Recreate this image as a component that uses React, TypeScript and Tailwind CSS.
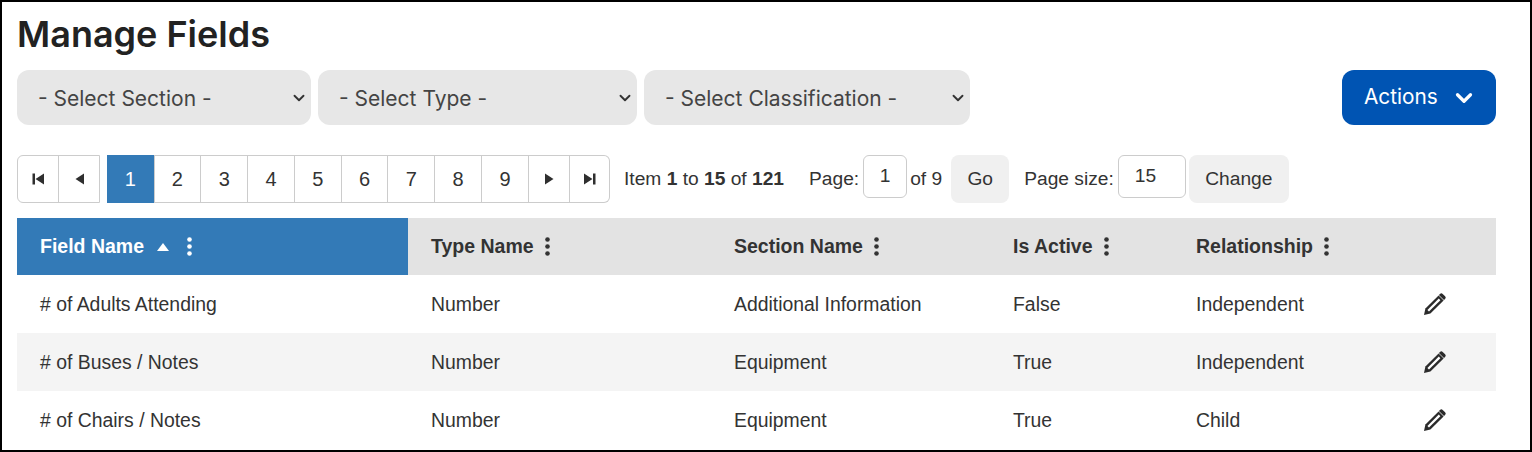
import { ChevronDown } from 'lucide-react';

const rows = [
  { name: '# of Adults Attending', type: 'Number', section: 'Additional Information', active: 'False', rel: 'Independent' },
  { name: '# of Buses / Notes', type: 'Number', section: 'Equipment', active: 'True', rel: 'Independent' },
  { name: '# of Chairs / Notes', type: 'Number', section: 'Equipment', active: 'True', rel: 'Child' },
];

const pages = ['1', '2', '3', '4', '5', '6', '7', '8', '9'];

function Dots({ className = '' }: { className?: string }) {
  return (
    <svg width="5" height="19" viewBox="0 0 5 19" className={className} fill="currentColor">
      <circle cx="2.5" cy="2.5" r="2.300" />
      <circle cx="2.5" cy="9.5" r="2.300" />
      <circle cx="2.5" cy="16.5" r="2.300" />
    </svg>
  );
}

function Pencil() {
  return (
    <svg width="24" height="24" viewBox="0 0 24 24" className="-ml-px">
      <path fill="#2b2b2b" d="M1 23l1.400-6.400L15.600 3.400l5 5L7.400 21.600 1 23z" />
      <path stroke="#fff" strokeWidth="2.200" d="M5.200 18.800L16.600 7.400" />
      <path fill="#2b2b2b" d="M17 1.900a1.900 1.900 0 0 1 2.700 0l2.400 2.400a1.900 1.900 0 0 1 0 2.700l-1.100 1.100-5.100-5.100z" />
    </svg>
  );
}

function Select({ label, width }: { label: string; width: string }) {
  return (
    <div className={`${width} h-[55px] bg-[#e7e7e7] rounded-[12px] flex items-center justify-between pl-[21px] pr-[3px] text-[#444] text-[21px] font-['Inter',sans-serif]`}>
      <span className="pt-[2px]">{label}</span>
      <ChevronDown size={18} strokeWidth={2.500} className="text-[#333]" />
    </div>
  );
}

function PagerArrow({ path }: { path: string }) {
  return (
    <div className="w-[41px] shrink-0 h-full border-r border-[#ccc] last:border-r-0 flex items-center justify-center">
      <svg width="14" height="14" viewBox="0 0 14 14" fill="#2f2f2f">
        <path d={path} />
      </svg>
    </div>
  );
}

function Header({ label }: { label: string }) {
  return (
    <th className="text-left font-bold text-[19.5px] pl-[23px]">
      <span className="flex items-center gap-[11px]">
        {label}
        <Dots />
      </span>
    </th>
  );
}

export default function App() {
  return (
    <div className="w-[1532px] h-[452px] overflow-hidden bg-white border-2 border-black pl-[15px] pr-[34px] text-[#333] font-['Liberation_Sans',Arial,sans-serif]">
      <h1 className="text-[36px] leading-[41px] mt-[12px] font-semibold text-[#222] font-['Inter',sans-serif]">Manage Fields</h1>

      {/* Filters */}
      <div className="flex items-center gap-[7px] mt-[15px]">
        <Select label="- Select Section -" width="w-[294px]" />
        <Select label="- Select Type -" width="w-[319px]" />
        <Select label="- Select Classification -" width="w-[326px]" />
        <button className="ml-auto w-[154px] h-[55px] rounded-[12px] bg-[#0054b3] text-white text-[20.8px] flex items-center pl-[22px] gap-[13px] font-['Inter',sans-serif]">
          <span className="pb-[1px]">Actions</span>
          <ChevronDown size={26} strokeWidth={3} />
        </button>
      </div>

      {/* Pager */}
      <div className="flex items-start mt-[30px] h-[48px] text-[19.2px] text-[#333]">
        <div className="flex h-full border border-[#ccc] rounded-l-[6px] w-[83px] bg-white">
          <PagerArrow path="M1.500 1.500h2.500v11H1.500zM13 1.500v11L4.500 7z" />
          <PagerArrow path="M11 1.500v11L2.500 7z" />
        </div>
        <div className="flex h-full ml-[7px] w-[503px] border-y border-r border-[#ccc] rounded-r-[6px]">
          {pages.map((p, i) => (
            <div
              key={p}
              className={`shrink-0 flex items-center justify-center text-[20px] border-r border-[#ccc] ${i === 0 ? 'w-[47.500px] -my-px bg-[#337ab7] text-white border-[#2e6da4]' : 'w-[46.800px]'}`}
            >
              {p}
            </div>
          ))}
          <PagerArrow path="M3 1.500v11L11.500 7z" />
          <PagerArrow path="M1 1.500v11L9.500 7zM10 1.500h2.500v11H10z" />
        </div>
        <span className="ml-[14px] self-center">Item <b>1</b> to <b>15</b> of <b>121</b></span>
        <span className="ml-[25px] self-center">Page:</span>
        <div className="ml-[4px] w-[44px] h-[43px] border border-[#ccc] rounded-[6px] flex items-center justify-center">1</div>
        <span className="ml-[3px] self-center">of 9</span>
        <div className="ml-[9px] w-[58px] h-full bg-[#f0f0f0] rounded-[8px] flex items-center justify-center">Go</div>
        <span className="ml-[15px] self-center">Page size:</span>
        <div className="ml-[4px] w-[68px] h-[43px] border border-[#ccc] rounded-[6px] flex items-center pl-[16px]">15</div>
        <div className="ml-[3px] w-[100px] h-full bg-[#f0f0f0] rounded-[8px] flex items-center justify-center">Change</div>
      </div>

      {/* Grid */}
      <table className="mt-[15px] w-[1479px] table-fixed border-collapse text-[19.4px]">
        <colgroup>
          <col className="w-[391px]" />
          <col className="w-[303px]" />
          <col className="w-[279px]" />
          <col className="w-[183px]" />
          <col className="w-[228px]" />
          <col className="w-[95px]" />
        </colgroup>
        <thead>
          <tr className="h-[57px] bg-[#e3e3e3]">
            <th className="bg-[#337ab7] text-white text-left font-bold text-[19.5px] pl-[23px]">
              <span className="flex items-center">
                Field Name
                <svg width="14" height="10" viewBox="0 0 14 10" fill="#fff" className="ml-[12px]">
                  <path d="M7 1l6 8H1z" />
                </svg>
                <Dots className="ml-[17px]" />
              </span>
            </th>
            <Header label="Type Name" />
            <Header label="Section Name" />
            <Header label="Is Active" />
            <Header label="Relationship" />
            <th />
          </tr>
        </thead>
        <tbody>
          {rows.map((r, i) => (
            <tr key={r.name} className={`h-[58px] ${i % 2 === 1 ? 'bg-[#f4f4f4]' : 'bg-white'}`}>
              <td className="pl-[23px] pt-[2px]">{r.name}</td>
              <td className="pl-[23px] pt-[2px]">{r.type}</td>
              <td className="pl-[23px] pt-[2px]">{r.section}</td>
              <td className="pl-[23px] pt-[2px]">{r.active}</td>
              <td className="pl-[23px] pt-[2px]">{r.rel}</td>
              <td className="pl-[23px]"><Pencil /></td>
            </tr>
          ))}
        </tbody>
      </table>
    </div>
  );
}
